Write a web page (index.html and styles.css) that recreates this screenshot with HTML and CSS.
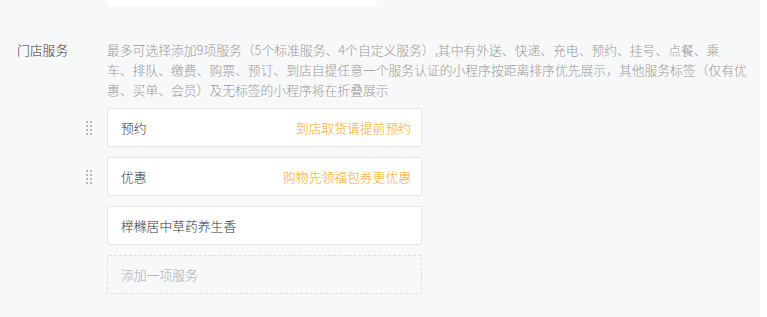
FILE: index.html
```html
<!DOCTYPE html>
<html lang="zh-CN">
<head>
  <meta charset="UTF-8">
  <meta name="viewport" content="width=device-width, initial-scale=1.0">
  <title>门店服务</title>
  <link rel="stylesheet" href="styles.css">
</head>
<body>

  <div class="panel">
    <!-- bottom of the field above -->
    <div class="prev-field"></div>

    <div class="form-row">
      <div class="form-label">门店服务</div>
      <div class="form-content">
        <p class="tips">最多可选择添加9项服务（5个标准服务、4个自定义服务）,其中有外送、快递、充电、预约、挂号、点餐、乘<br>车、排队、缴费、购票、预订、到店自提任意一个服务认证的小程序按距离排序优先展示，其他服务标签（仅有优<br>惠、买单、会员）及无标签的小程序将在折叠展示</p>

        <ul class="service-list">
          <li class="service-item">
            <span class="drag-handle">
              <svg width="6" height="14" viewBox="0 0 6 14">
                <g fill="#b4b6ba">
                  <rect x="0" y="0" width="2" height="2"/><rect x="4" y="0" width="2" height="2"/>
                  <rect x="0" y="4" width="2" height="2"/><rect x="4" y="4" width="2" height="2"/>
                  <rect x="0" y="8" width="2" height="2"/><rect x="4" y="8" width="2" height="2"/>
                  <rect x="0" y="12" width="2" height="2"/><rect x="4" y="12" width="2" height="2"/>
                </g>
              </svg>
            </span>
            <div class="service-card">
              <span class="service-name">预约</span>
              <span class="service-desc">到店取货请提前预约</span>
            </div>
          </li>
          <li class="service-item">
            <span class="drag-handle">
              <svg width="6" height="14" viewBox="0 0 6 14">
                <g fill="#b4b6ba">
                  <rect x="0" y="0" width="2" height="2"/><rect x="4" y="0" width="2" height="2"/>
                  <rect x="0" y="4" width="2" height="2"/><rect x="4" y="4" width="2" height="2"/>
                  <rect x="0" y="8" width="2" height="2"/><rect x="4" y="8" width="2" height="2"/>
                  <rect x="0" y="12" width="2" height="2"/><rect x="4" y="12" width="2" height="2"/>
                </g>
              </svg>
            </span>
            <div class="service-card">
              <span class="service-name">优惠</span>
              <span class="service-desc">购物先领福包券更优惠</span>
            </div>
          </li>
          <li class="service-item">
            <div class="service-card">
              <span class="service-name">榉橼居中草药养生香</span>
            </div>
          </li>
          <li class="service-item">
            <div class="service-card add-card">
              <span class="add-text">添加一项服务</span>
            </div>
          </li>
        </ul>
      </div>
    </div>
  </div>

</body>
</html>
```

FILE: styles.css
```css
/* Page */
body {
  margin: 0;
  background-color: #fff;
  font-family: "Microsoft YaHei", "Noto Sans CJK SC", "Noto Sans", sans-serif;
  font-size: 12.8px;
  font-weight: 300;
  color: #333;
  text-spacing-trim: space-all;
}

.panel {
  width: 760px;
  height: 317px;
  background-color: #f7f8fa;
  overflow: hidden;
}

.prev-field {
  width: 270px;
  height: 6px;
  margin-left: 107px;
  background-color: #fff;
  border-radius: 0 0 3px 3px;
}

/* Form row */
.form-row {
  display: flex;
  margin-top: 34px;
}

.form-label {
  width: 90px;
  padding-left: 17px;
  line-height: 20px;
  color: #333;
}

.form-content {
  width: 650px;
}

.tips {
  margin: 0;
  line-height: 20px;
  color: #999;
  white-space: nowrap;
}

/* Service list */
.service-list {
  list-style: none;
  margin: 8px 0 0;
  padding: 0;
}

.service-item {
  display: flex;
  align-items: center;
  margin-bottom: 10px;
}

.drag-handle {
  display: flex;
  width: 21px;
  margin-left: -21px;
  cursor: move;
}

.service-card {
  box-sizing: border-box;
  display: flex;
  align-items: center;
  justify-content: space-between;
  width: 315px;
  height: 39px;
  padding: 0 10px 0 13px;
  background-color: #fff;
  border: 1px solid #e5e6ea;
  border-radius: 2px;
}

.service-name {
  color: #333;
}

.service-desc {
  color: #f7a521;
}

.add-card {
  background-color: transparent;
  border: 1px dashed #dcdde0;
}

.add-text {
  color: #aaa;
}
```
